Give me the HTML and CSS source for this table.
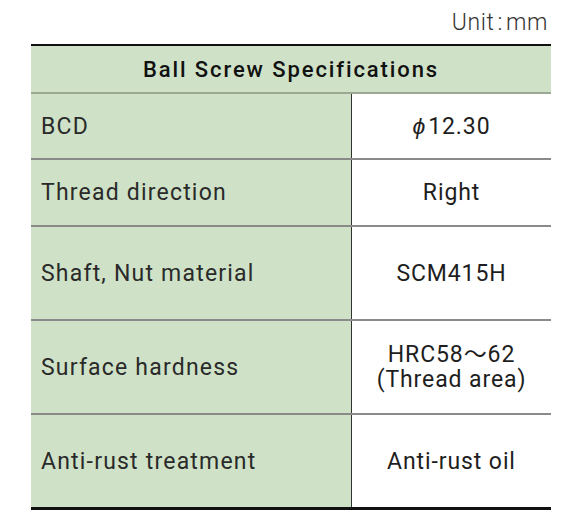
FILE: index.html
```html
<!DOCTYPE html>
<html>
<head>
<meta charset="utf-8">
<link rel="stylesheet" href="styles.css">
</head>
<body>
<div class="wrap">
  <div class="unit">Unit<span class="colon">:</span>mm</div>
  <table class="spec">
    <thead>
      <tr class="head"><th colspan="2">Ball Screw Specifications</th></tr>
    </thead>
    <tbody>
      <tr class="r1"><td class="label">BCD</td><td class="val"><span class="phi">ϕ</span>12.30</td></tr>
      <tr class="r2"><td class="label">Thread direction</td><td class="val">Right</td></tr>
      <tr class="r3"><td class="label">Shaft, Nut material</td><td class="val">SCM415H</td></tr>
      <tr class="r4"><td class="label">Surface hardness</td><td class="val two">HRC58～62<br>(Thread area)</td></tr>
      <tr class="r5 last"><td class="label">Anti-rust treatment</td><td class="val">Anti-rust oil</td></tr>
    </tbody>
  </table>
</div>
</body>
</html>
```
FILE: styles.css
```css
html, body {
  margin: 0;
  padding: 0;
  background: #ffffff;
}
body {
  font-family: "Roboto", "Noto Sans CJK JP", sans-serif;
  color: #222;
}
.wrap {
  width: 520px;
  margin-left: 31px;
  padding-top: 8px;
}
.unit {
  text-align: right;
  font-size: 23px;
  font-weight: 300;
  height: 36px;
  line-height: 30px;
  margin-right: 3px;
  letter-spacing: 0.6px;
  color: #333;
}
.colon {
  margin: 0 3px;
}
.spec {
  width: 520px;
  border-collapse: collapse;
  border-top: 2px solid #111;
  border-bottom: 3px solid #111;
}
.spec th,
.spec td {
  padding: 0;
}
.head th {
  background: #cfe2c7;
  height: 46px;
  font-size: 22px;
  font-weight: 500;
  letter-spacing: 1.9px;
  text-align: center;
  border-bottom: 2px solid #9ba894;
  color: #111;
}
.label {
  background: #cfe2c7;
  width: 310px;
  padding-left: 10px !important;
  font-size: 23px;
  font-weight: 400;
  letter-spacing: 1.2px;
  border-right: 1px solid #333;
  text-align: left;
  color: #2a2a2a;
}
.val {
  font-size: 23px;
  letter-spacing: 0.9px;
  text-align: center;
  line-height: 25px;
  color: #1e1e1e;
}
.phi {
  font-style: italic;
  font-weight: 500;
  margin-right: 2px;
}
tbody tr td {
  border-bottom: 2px solid #8a8a8a;
}
tbody tr.last td {
  border-bottom: none;
}
.r1 td { height: 64px; }
.r2 td { height: 65px; }
.r3 td { height: 92px; }
.r4 td { height: 92px; }
.r5 td { height: 92px; }
```
